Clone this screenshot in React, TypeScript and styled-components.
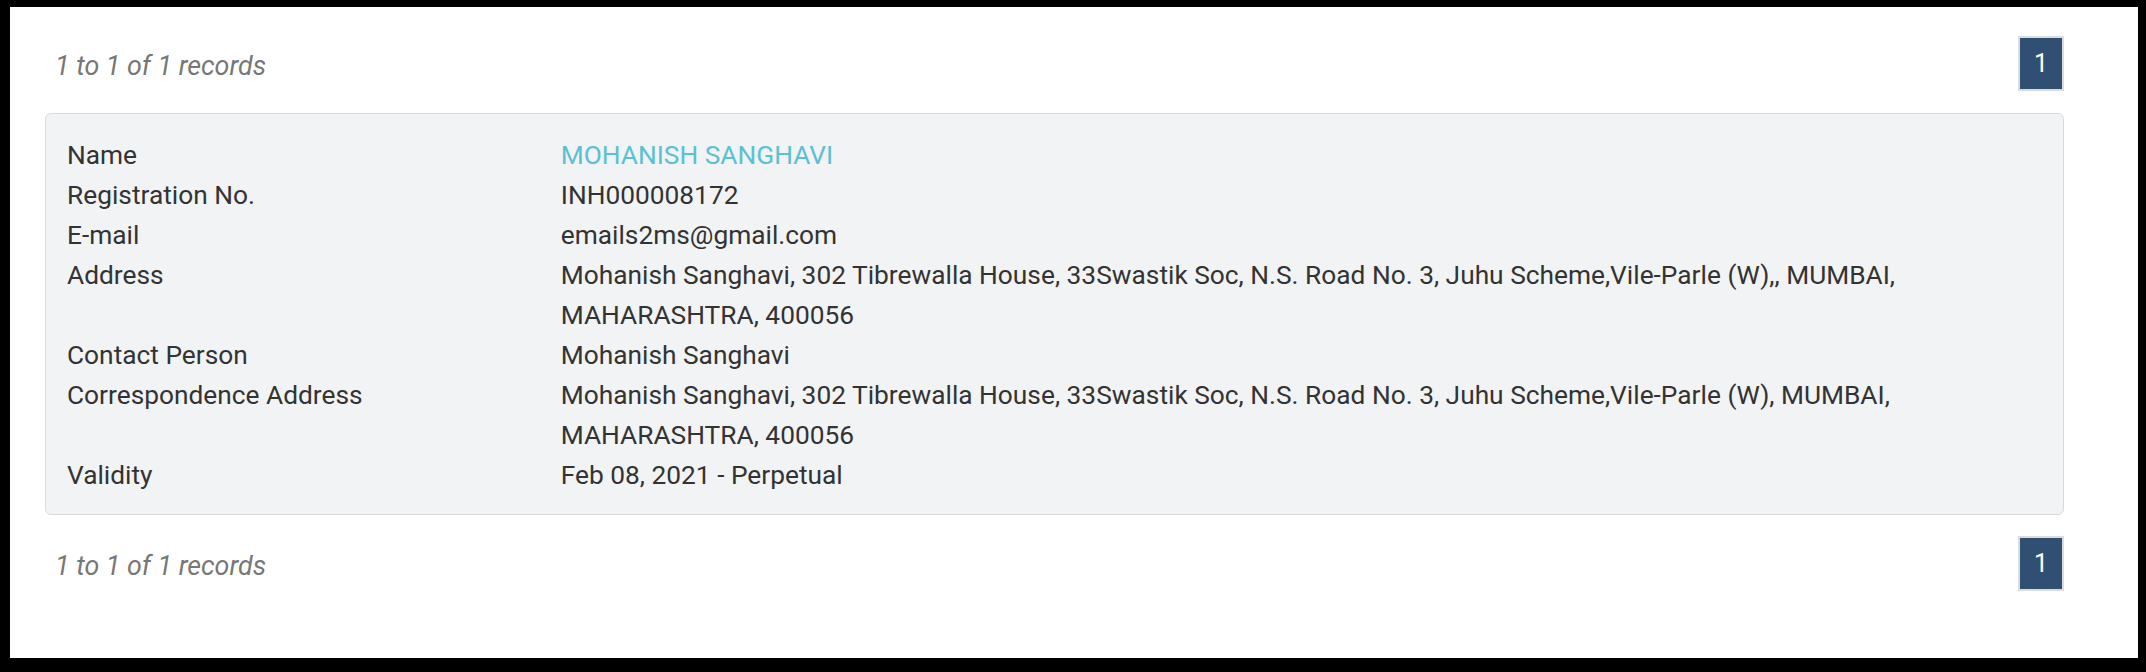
import React from "react";
import styled, { createGlobalStyle } from "styled-components";

const GlobalStyle = createGlobalStyle`
  html, body {
    margin: 0;
    padding: 0;
    background: #000;
  }
  body {
    font-family: Roboto, "Liberation Sans", Arial, sans-serif;
    color: #333;
  }
`;

const Frame = styled.div`
  margin: 7px 8px 14px 10px;
  height: 651px;
  box-sizing: border-box;
  padding: 29px 74px 0 35px;
  background: #fff;
`;

const Toolbar = styled.div`
  display: flex;
  align-items: center;
  justify-content: space-between;
  height: 55px;
`;

const RecordCount = styled.span`
  padding: 4px 0 0 10px;
  font-size: 26.8px;
  font-style: italic;
  color: #777;
`;

const PageButton = styled.button`
  width: 46px;
  height: 55px;
  box-sizing: border-box;
  padding: 0;
  border: 2px solid #dcdcdc;
  background: #2f5073;
  color: #fff;
  font-family: Roboto, "Liberation Sans", Arial, sans-serif;
  font-size: 25px;
  line-height: 1;
  cursor: pointer;
`;

const Card = styled.div`
  margin: 22px 0 21px;
  padding: 21px 21px 19px;
  border: 1px solid #dadada;
  border-radius: 6px;
  background: #f2f3f5;
`;

const Row = styled.div`
  display: grid;
  grid-template-columns: 1fr 3fr;
  font-size: 26.3px;
  line-height: 40px;
`;

const Label = styled.div`
  color: #333;
`;

const Value = styled.div<{ $highlight?: boolean }>`
  color: ${(p) => (p.$highlight ? "#5bc1d1" : "#333")};
`;

type Field = { label: string; value: string; highlight?: boolean };

const fields: Field[] = [
  { label: "Name", value: "MOHANISH SANGHAVI", highlight: true },
  { label: "Registration No.", value: "INH000008172" },
  { label: "E-mail", value: "emails2ms@gmail.com" },
  {
    label: "Address",
    value:
      "Mohanish Sanghavi, 302 Tibrewalla House, 33Swastik Soc, N.S. Road No. 3, Juhu Scheme,Vile-Parle (W),, MUMBAI, MAHARASHTRA, 400056",
  },
  { label: "Contact Person", value: "Mohanish Sanghavi" },
  {
    label: "Correspondence Address",
    value:
      "Mohanish Sanghavi, 302 Tibrewalla House, 33Swastik Soc, N.S. Road No. 3, Juhu Scheme,Vile-Parle (W), MUMBAI, MAHARASHTRA, 400056",
  },
  { label: "Validity", value: "Feb 08, 2021 - Perpetual" },
];

const Pager = () => (
  <Toolbar>
    <RecordCount>1 to 1 of 1 records</RecordCount>
    <PageButton>1</PageButton>
  </Toolbar>
);

const App = () => (
  <>
    <GlobalStyle />
    <Frame>
      <Pager />
      <Card>
        {fields.map((f) => (
          <Row key={f.label}>
            <Label>{f.label}</Label>
            <Value $highlight={f.highlight}>{f.value}</Value>
          </Row>
        ))}
      </Card>
      <Pager />
    </Frame>
  </>
);

export default App;
